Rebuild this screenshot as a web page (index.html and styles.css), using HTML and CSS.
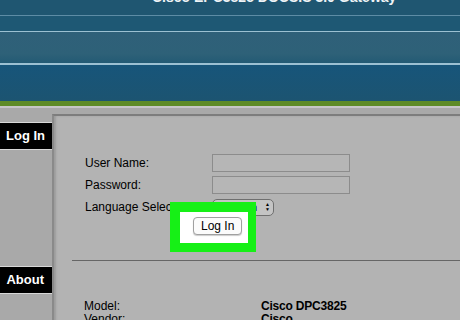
FILE: index.html
```html
<!DOCTYPE html>
<html lang="en">
<head>
    <meta charset="UTF-8">
    <title>Cisco EPC3825 Gateway</title>
    <link rel="stylesheet" href="styles.css">
</head>
<body>
    <header class="top">
        <div class="title"><span>Cisco EPC3825 DOCSIS 3.0 Gateway</span></div>
        <div class="band band1"></div>
        <div class="band band2"></div>
        <div class="band band3"></div>
        <div class="green"></div>
    </header>
    <div class="main">
        <div class="side">
            <div class="tab">Log In</div>
            <div class="tab about">About</div>
        </div>
        <div class="panel">
            <form class="login">
                <div class="row"><label>User Name:</label><input type="text"></div>
                <div class="row"><label>Password:</label><input type="password"></div>
                <div class="row"><label>Language Selection</label>
                    <span class="select">English <span class="arr">&#9650;<br>&#9660;</span></span>
                </div>
                <div class="mark"><span class="btn">Log In</span></div>
            </form>
            <hr>
            <dl class="info">
                <dt>Model:</dt><dd>Cisco DPC3825</dd>
                <dt>Vendor:</dt><dd>Cisco</dd>
            </dl>
        </div>
    </div>
</body>
</html>
```

FILE: styles.css
```css
*{ margin: 0; padding: 0; box-sizing: border-box}
html,body{
    height:100%;
    overflow: hidden;
}
body{
    background: #a9a9a9;
    font-family: "Liberation Sans", Arial, sans-serif;
    color: #000;
}
.top{
    background: #1c5472;
}
.title{
    height:15px;
    padding-left:152px;
    color: #eef3f6;
    font-size:14px;
    font-weight: bold;
    white-space: nowrap;
    overflow: hidden;
    background: #1f5671;
}
.title span{
    display: block;
    line-height: 14px;
    margin-top:-10px;
}
.band1{
    height:16px;
    border-top: 1px solid #5d8ca5;
    background: #1e5874;
}
.band2{
    height:34px;
    border-top: 1px solid #9cc0d2;
    border-bottom: 2px solid #9cc0d2;
    background: linear-gradient(#2f6079,#2e6178 70%,#235a74);
}
.band3{
    height:36px;
    background: linear-gradient(#17557a,#1c5471);
}
.green{
    height:7px;
    background: #5e8b26;
    border-bottom: 2px solid #c6c6c6;
}
.main{
    display: flex;
}
.side{
    width:52px;
    padding-top:14px;
}
.tab{
    height:28px;
    background: #000;
    border-top: 1px solid #d8d8d8;
    border-bottom: 1px solid #d8d8d8;
    color: #fff;
    font-size:13px;
    font-weight: bold;
    line-height: 25px;
    text-align: right;
    padding-right:7px;
}
.tab.about{
    margin-top:116px;
    padding-right:8px;
}
.panel{
    flex: 1;
    margin-top:6px;
    height:220px;
    background: #b3b3b3;
    border-top: 2px solid #7d7d7d;
    border-left: 2px solid #8a8a8a;
    box-shadow: inset 2px 0 2px #9c9c9c;
}
.login{
    position: relative;
    padding:36px 0 0 31px;
}
.row{
    display: flex;
    align-items: center;
    height:22px;
    font-size:12px;
}
.row label{
    width:127px;
    white-space: nowrap;
}
.row input{
    width:138px;
    height:18px;
    border: 1px solid #8c8c8c;
    background: #b6b6b6;
}
.select{
    display: flex;
    align-items: center;
    height:17px;
    padding: 0 3px 0 8px;
    border: 1px solid #6f6f6f;
    border-radius: 5px;
    background: #c4c4c4;
    font-size:11px;
    gap:8px;
}
.arr{
    font-size:5px;
    line-height: 5px;
    text-align: center;
}
.mark{
    position: absolute;
    left:116px;
    top:86px;
    width:86px;
    height:50px;
    background: #16f016;
    padding:10px 8px 9px 10px;
}
.mark .btn{
    position: relative;
    display: block;
    height:100%;
    background: #fff;
    color: transparent;
    font-size:12px;
}
.mark .btn::after{
    content: "Log In";
    color: #000;
    background: #fbfbfb;
    border: 1px solid #a0a0a0;
    border-radius: 4px;
    padding: 1px 7px;
    position: absolute;
    top:5px;
    left:13px;
    box-shadow: 0 1px 1px #ccc;
}
hr{
    margin:42px 0 0 18px;
    border: 0;
    border-top: 1px solid #666;
}
.info{
    display: grid;
    grid-template-columns: 177px auto;
    padding:39px 0 0 30px;
    font-size:12px;
    line-height: 13px;
}
.info dd{
    font-weight: bold;
    letter-spacing: -.2px;
}
```
